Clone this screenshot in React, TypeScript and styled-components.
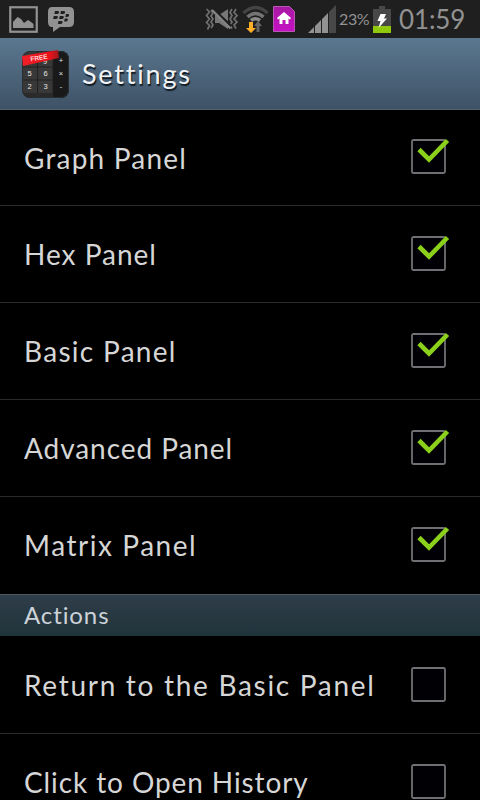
import React from "react";
import styled, { createGlobalStyle } from "styled-components";

const GlobalStyle = createGlobalStyle`
  html, body { margin: 0; padding: 0; background: #000; overflow: hidden; }
  * { box-sizing: border-box; }
`;

const Screen = styled.main`
  width: 480px;
  height: 800px;
  overflow: hidden;
  display: flex;
  flex-direction: column;
  background: #000;
  font-family: Lato, "Open Sans", sans-serif;
`;

const StatusBar = styled.div`
  flex: none;
  height: 38px;
  display: flex;
  align-items: center;
  justify-content: space-between;
  padding: 0 16px 0 9px;
  background: #1f1f1f;
  color: #929292;
`;

const StatusGroup = styled.div<{ $gap?: number }>`
  display: flex;
  align-items: center;
  gap: ${(p) => p.$gap ?? 0}px;
`;

const Icon = styled.svg`
  display: block;
  flex: none;
`;

const SignalSlot = styled.div`
  padding: 0 3px 0 13px;
`;

const BatteryLevel = styled.span`
  width: 34px;
  font-size: 16px;
  line-height: 20px;
  letter-spacing: -0.4px;
  white-space: nowrap;
`;

const Clock = styled.span`
  width: 65px;
  margin-left: 8px;
  font-size: 26px;
  line-height: 36px;
  letter-spacing: -0.1px;
  white-space: nowrap;
`;

const TitleBar = styled.header`
  flex: none;
  height: 72px;
  display: flex;
  align-items: center;
  gap: 12px;
  padding-left: 21px;
  background: linear-gradient(#5b7890, #3e5266);
  border-bottom: 1px solid #536270;
`;

const Title = styled.h1`
  margin: 0;
  padding-top: 1px;
  font-size: 27px;
  line-height: 36px;
  font-weight: 400;
  letter-spacing: 1.8px;
  color: #f1f4f7;
  text-shadow: 1px 2px 1px #101820;
`;

const List = styled.section`
  flex: none;
  display: flex;
  flex-direction: column;
`;

const Row = styled.label`
  flex: none;
  height: 97px;
  display: flex;
  align-items: center;
  justify-content: space-between;
  padding: 0 31px 0 24px;
  border-bottom: 1px solid #292b2b;

  ${TitleBar} + ${List} > &:first-child { height: 96px; }
  &:last-child { border-bottom-color: transparent; }
`;

const RowLabel = styled.span<{ $spacing: number }>`
  font-size: 28px;
  line-height: 36px;
  letter-spacing: ${(p) => p.$spacing}px;
  color: #d6d6d6;
  white-space: nowrap;
`;

const SectionHeader = styled.h2`
  flex: none;
  margin: 0 0 1px;
  height: 42px;
  padding-left: 24px;
  border-top: 1px solid #4b5a63;
  background: linear-gradient(#2f3d48, #20333b);
  color: #ccd3d8;
  font-size: 24px;
  line-height: 39px;
  font-weight: 400;
  letter-spacing: 0.9px;
`;

function PictureIcon() {
  return (
    <Icon width="29" height="27" viewBox="0 0 29 27">
      <rect x="1.25" y="1.25" width="26.5" height="24.5" fill="none" stroke="#929292" strokeWidth="2.2" />
      <path d="M4 22v-6l4.500-5 3.500 2 3 4 4-3 3 2 2.500 2v4z" fill="#929292" />
    </Icon>
  );
}

function MessengerIcon() {
  return (
    <Icon width="28" height="27" viewBox="0 0 28 27">
      <path d="M5 1h17q5 0 5 5v10q0 5-5 5h-9l-7 5v-5H5q-4 0-4-5V6q0-5 4-5z" fill="#929292" />
      <g fill="#1f1f1f">
        <path d="M8 5h3q1.500 0 1 1.500T10 8H7.300z" />
        <path d="M14 5h3q1.500 0 1 1.500T16 8h-2.700z" />
        <path d="M6.800 10h3q1.500 0 1 1.500T8.800 13H6.100z" />
        <path d="M12.800 10h3q1.500 0 1 1.500T14.800 13h-2.700z" />
        <path d="M19 8h2q1.500 0 1 1.500T20 11h-1.700z" />
        <path d="M17.800 12.500h2q1.500 0 1 1.500t-2 1.500h-1.700z" />
        <path d="M11.500 15h3q1.500 0 1 1.500t-2 1.500h-2.700z" />
      </g>
    </Icon>
  );
}

function VibrateIcon() {
  return (
    <Icon width="33" height="24" viewBox="0 0 33 24">
      <path d="M1.500 2l3 3-3 3.500 3 3.500-3 3.500 3 3-2 4M27 2l-2 3.500 2 3-2 3.500 2 3-2 3 2 3.500M31 2l-2 3.500 3 3-3 3.500 3 3-3 3 2 3.500" fill="none" stroke="#707070" strokeWidth="1.7" />
      <path d="M6 3l2 3-2 3 2 3-2 3 2 3-2 3" fill="none" stroke="#707070" strokeWidth="1.7" />
      <path d="M10 8h4l9-6v20l-9-6h-4z" fill="#777" />
      <path d="M8 2.500l18 17" stroke="#1f1f1f" strokeWidth="3.500" />
      <path d="M7 3l18.500 18.500" stroke="#858585" strokeWidth="2.300" />
    </Icon>
  );
}

function WifiIcon() {
  return (
    <Icon width="27" height="28" viewBox="0 0 27 28">
      <g fill="none">
        <path d="M1.500 8q12-11 24 0" stroke="#444" strokeWidth="3.500" />
        <path d="M5.500 12q8-7 16 0" stroke="#747474" strokeWidth="3.500" />
        <path d="M9 15.500q4.500-3.500 9 0" stroke="#898989" strokeWidth="3.500" />
      </g>
      <path d="M7 17h4v6h3l-5 5-5-5h3z" fill="#ffae28" />
      <path d="M14.500 27v-6H12l4-5 4 5h-2.500v6z" fill="#646464" />
    </Icon>
  );
}

function HomeBadgeIcon() {
  return (
    <Icon width="22" height="26" viewBox="0 0 22 26">
      <defs>
        <linearGradient id="home-fill" x2="0" y2="1">
          <stop stopColor="#a719a3" />
          <stop offset="1" stopColor="#c611c3" />
        </linearGradient>
      </defs>
      <path d="M.5.500h16l5 5v20H.5z" fill="url(#home-fill)" stroke="#b957b5" />
      <path d="M11 6l7 6-1 1.500-1.500-1V18h-3v-4h-3v4h-3v-5.500L5 13.500 4 12z" fill="#fff" />
    </Icon>
  );
}

function SignalIcon() {
  return (
    <Icon width="28" height="28" viewBox="0 0 28 28">
      <path d="M0 28l6-6v6zM7 28v-7l6-6v13zM14 28V14l6-6v20z" fill="#929292" />
      <path d="M21 28V7l7-7v28z" fill="#484848" />
    </Icon>
  );
}

function BatteryIcon() {
  return (
    <Icon width="18" height="27" viewBox="0 0 18 27">
      <path d="M6 0h6v3h6v24H0V3h6z" fill="#484848" />
      <path d="M0 20h18v7H0z" fill="#91c90c" />
      <path d="M7.500 8H13l-2 4.500h3L5.500 22l2-7h-3z" fill="#fff" />
    </Icon>
  );
}

function CalculatorIcon() {
  return (
    <Icon width="49" height="50" viewBox="0 0 49 50">
      <defs>
        <clipPath id="calc-body"><rect x="1" y="2" width="47" height="47" rx="8" /></clipPath>
        <linearGradient id="ribbon"><stop stopColor="#f12028" /><stop offset=".75" stopColor="#e8121b" /><stop offset="1" stopColor="#9b191d" /></linearGradient>
      </defs>
      <g clipPath="url(#calc-body)">
        <path d="M0 0h49v50H0z" fill="#383838" />
        <path d="M32 0h17v50H32z" fill="#191919" />
        <path d="M0 18h32M0 31h32M16.500 0v44M32 0v50" stroke="#202020" />
        <path d="M0 44h32v6H0z" fill="#2a2a2a" />
      </g>
      <rect x="1.500" y="2.500" width="46" height="46" rx="8" fill="none" stroke="#282d31" />
      <g fill="#e5e5e5" fontFamily="Liberation Sans, sans-serif" fontSize="7.500" textAnchor="middle">
        <text x="24" y="15">9</text><text x="40" y="14">+</text>
        <text x="8.500" y="27">5</text><text x="24.500" y="27">6</text><text x="40" y="27">×</text>
        <text x="8.500" y="40">2</text><text x="24.500" y="40">3</text><text x="40" y="40">-</text>
      </g>
      <path d="M1 7L37 1l1 8L2 17z" fill="url(#ribbon)" />
      <text x="18" y="11" transform="rotate(-9 18 9)" textAnchor="middle" fontSize="6.500" fontWeight="700" fontFamily="Liberation Sans, sans-serif" fill="#ffd5d5">FREE</text>
    </Icon>
  );
}

const CheckboxIcon = styled(Icon)`
  overflow: visible;
  margin-bottom: 2px;
`;

function Checkbox({ checked }: { checked: boolean }) {
  return (
    <CheckboxIcon width="38" height="35" viewBox="0 0 38 35">
      <rect x="1" y="1" width="33" height="33" rx="1.500" fill="#010105" stroke="#707074" strokeWidth="1.800" />
      {checked && <path d="M8 10.500l10 10L36.500 1.500" fill="none" stroke="#8bd01b" strokeWidth="4.600" />}
    </CheckboxIcon>
  );
}

interface Setting { label: string; checked: boolean; spacing: number }

const panels: Setting[] = [
  { label: "Graph Panel", checked: true, spacing: 1.2 },
  { label: "Hex Panel", checked: true, spacing: 1 },
  { label: "Basic Panel", checked: true, spacing: 1.3 },
  { label: "Advanced Panel", checked: true, spacing: 0.93 },
  { label: "Matrix Panel", checked: true, spacing: 1.55 },
];

const actions: Setting[] = [
  { label: "Return to the Basic Panel", checked: false, spacing: 1.7 },
  { label: "Click to Open History", checked: false, spacing: 0.9 },
];

function SettingsList({ items }: { items: Setting[] }) {
  return (
    <List>
      {items.map(({ label, checked, spacing }) => (
        <Row key={label}>
          <RowLabel $spacing={spacing}>{label}</RowLabel>
          <Checkbox checked={checked} />
        </Row>
      ))}
    </List>
  );
}

export default function App() {
  return (
    <Screen>
      <GlobalStyle />
      <StatusBar>
        <StatusGroup $gap={9}><PictureIcon /><MessengerIcon /></StatusGroup>
        <StatusGroup>
          <StatusGroup $gap={4}><VibrateIcon /><WifiIcon /><HomeBadgeIcon /></StatusGroup>
          <StatusGroup>
            <SignalSlot><SignalIcon /></SignalSlot>
            <BatteryLevel>23%</BatteryLevel>
            <BatteryIcon />
            <Clock>01:59</Clock>
          </StatusGroup>
        </StatusGroup>
      </StatusBar>
      <TitleBar><CalculatorIcon /><Title>Settings</Title></TitleBar>
      <SettingsList items={panels} />
      <SectionHeader>Actions</SectionHeader>
      <SettingsList items={actions} />
    </Screen>
  );
}
